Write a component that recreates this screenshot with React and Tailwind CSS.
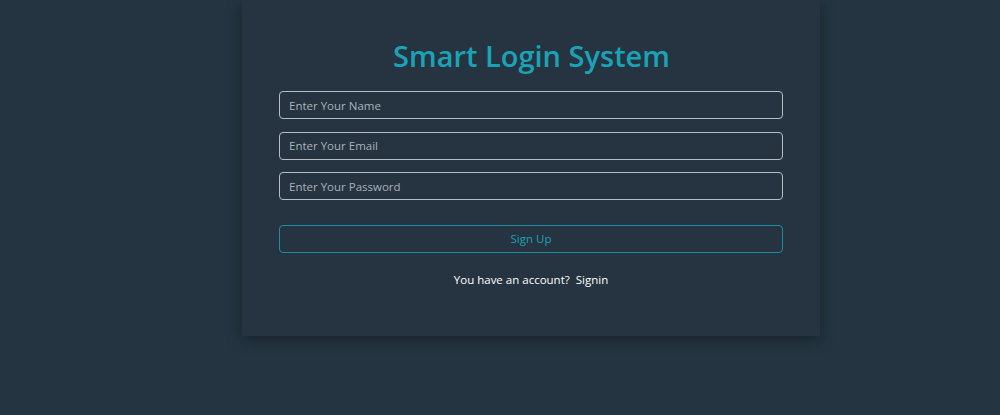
import React from 'react';

const App = () => {
  return (
    <div className="min-h-[415px] w-full bg-[#243541] font-['Open_Sans',sans-serif]">
      <div className="ml-[242px] w-[578px] h-[336px] bg-[#253440] shadow-[0_4px_14px_rgba(0,0,0,0.35)] px-[37px] pt-[36px]">
        <h1 className="text-center text-[29px] leading-[40px] text-[#1aa3b7] font-semibold mb-[15px] pl-[1px]">
          Smart Login System
        </h1>
        <form className="flex flex-col gap-[12.5px]" onSubmit={e => e.preventDefault()}>
          <input
            type="text"
            placeholder="Enter Your Name"
            className="h-[28px] w-full rounded-[4px] border border-[#b6bec4] bg-transparent px-[9px] text-[11.5px] text-white placeholder:text-[#a9b2b8] outline-none"
          />
          <input
            type="email"
            placeholder="Enter Your Email"
            className="h-[28px] w-full rounded-[4px] border border-[#b6bec4] bg-transparent px-[9px] text-[11.5px] text-white placeholder:text-[#a9b2b8] outline-none"
          />
          <input
            type="password"
            placeholder="Enter Your Password"
            className="h-[28px] w-full rounded-[4px] border border-[#b6bec4] bg-transparent px-[9px] text-[11.5px] text-white placeholder:text-[#a9b2b8] outline-none"
          />
          <button
            type="submit"
            className="mt-[12px] h-[28px] w-full rounded-[4px] border border-[#1a8fa3] bg-transparent text-[11.5px] text-[#1aa3b7]"
          >
            Sign Up
          </button>
        </form>
        <p className="mt-[18px] text-center text-[11.5px] text-white">
          You have an account?&nbsp; <a href="#" className="text-white">Signin</a>
        </p>
      </div>
    </div>
  );
};

export default App;
